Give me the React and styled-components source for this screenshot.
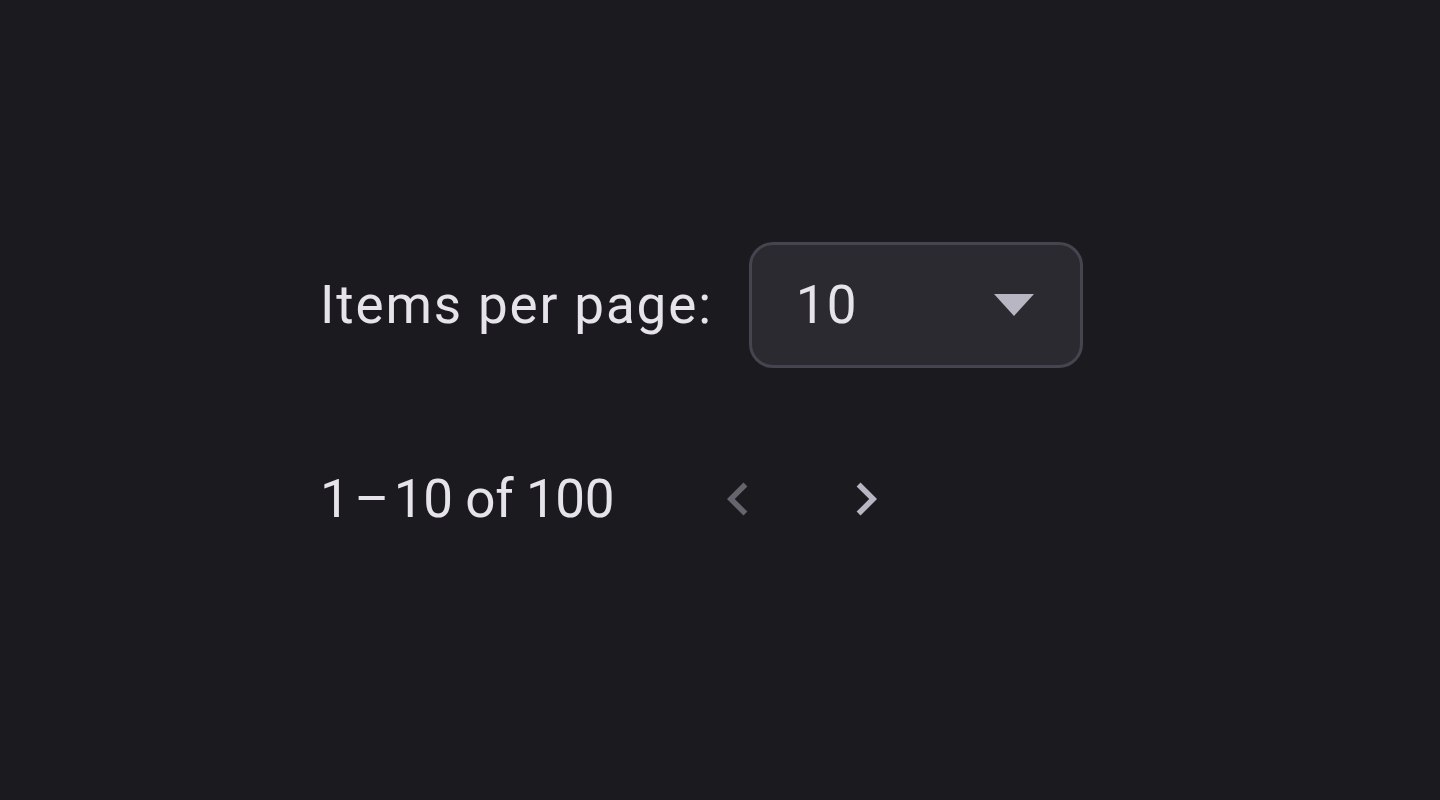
import React from "react";
import styled, { createGlobalStyle } from "styled-components";

const Global = createGlobalStyle`
  html, body { margin: 0; padding: 0; background: #1b1a1f; }
  body { font-family: "Roboto", "Liberation Sans", sans-serif; }
`;

const Page = styled.div`
  width: 1440px;
  height: 800px;
  box-sizing: border-box;
  padding: 242px 0 0 320px;
  display: flex;
  flex-direction: column;
  gap: 67px;
  background: #1b1a1f;
  color: #e6e4ea;
`;

const Row = styled.div`
  display: flex;
  align-items: center;
  gap: ${(p) => p.$gap || 0}px;
  height: ${(p) => p.$h}px;
`;

const Label = styled.span`
  font-size: 53px;
  line-height: 1;
  letter-spacing: 1.85px;
  white-space: nowrap;
`;

const Select = styled.div`
  box-sizing: border-box;
  width: 334px;
  height: 126px;
  border: 3px solid #45444f;
  border-radius: 24px;
  background: #2a2a30;
  display: flex;
  align-items: center;
  justify-content: space-between;
  padding: 0 46px 0 44px;
`;

const Value = styled.span`
  font-size: 53px;
  line-height: 1;
  letter-spacing: 1px;
`;

const Caret = styled.span`
  width: 0;
  height: 0;
  border-left: 20px solid transparent;
  border-right: 20px solid transparent;
  border-top: 22px solid #b8b6c2;
`;

const Range = styled.span`
  font-size: 53px;
  line-height: 1;
  white-space: nowrap;
  letter-spacing: -0.4px;
  margin-right: 60px;
`;

const NavButton = styled.button`
  width: 128px;
  height: 128px;
  border: none;
  background: transparent;
  padding: 0;
  display: flex;
  align-items: center;
  justify-content: center;
  color: ${(p) => (p.disabled ? "#65656d" : "#b8b6c2")};
  cursor: ${(p) => (p.disabled ? "default" : "pointer")};
  svg { width: 66px; height: 66px; display: block; }
`;

export default function App() {
  return (
    <>
      <Global />
      <Page>
        <Row $h={126} $gap={36}>
          <Label>Items per page:</Label>
          <Select>
            <Value>10</Value>
            <Caret />
          </Select>
        </Row>
        <Row $h={128}>
          <Range>{"1\u200A–\u200A10 of 100"}</Range>
          <NavButton disabled aria-label="Previous page">
            <svg viewBox="0 0 24 24" fill="currentColor">
              <path d="M15.41 7.41L14 6l-6 6 6 6 1.41-1.41L10.83 12z" />
            </svg>
          </NavButton>
          <NavButton aria-label="Next page">
            <svg viewBox="0 0 24 24" fill="currentColor">
              <path d="M10 6L8.59 7.41 13.17 12l-4.58 4.59L10 18l6-6z" />
            </svg>
          </NavButton>
        </Row>
      </Page>
    </>
  );
}
